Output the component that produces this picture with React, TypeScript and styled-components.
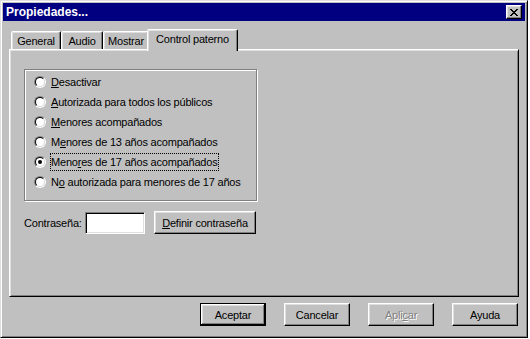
import styled, { createGlobalStyle } from "styled-components";

const GlobalStyle = createGlobalStyle`
  html, body {
    margin: 0;
    padding: 0;
    background: #ffffff;
  }
  body {
    font-family: "Liberation Sans", Arial, sans-serif;
    font-size: 11px;
    letter-spacing: -0.2px;
    color: #000;
  }
`;

const Window = styled.div`
  width: 528px;
  height: 338px;
  box-sizing: border-box;
  display: flex;
  flex-direction: column;
  padding: 2px;
  background: #c0c0c0;
  border: 1px solid;
  border-color: #dfdfdf #000 #000 #dfdfdf;
  box-shadow: inset 1px 1px #fff, inset -1px -1px #808080;
`;

const TitleBar = styled.div`
  height: 18px;
  display: flex;
  align-items: center;
  padding: 0 3px 0 3px;
  background: #000080;
  color: #fff;
  font-weight: bold;
  font-size: 12px;
  letter-spacing: 0;
`;

const TitleText = styled.span`
  flex: 1;
`;

const CloseButton = styled.div`
  width: 16px;
  height: 14px;
  box-sizing: border-box;
  display: flex;
  align-items: center;
  justify-content: center;
  background: #c0c0c0;
  border: 1px solid;
  border-color: #fff #000 #000 #fff;
  box-shadow: inset -1px -1px #808080, inset 1px 1px #dfdfdf;
`;

const Body = styled.div`
  flex: 1;
  display: flex;
  flex-direction: column;
  padding: 0 6px;
`;

const TabStrip = styled.div`
  margin-top: 8px;
  height: 20px;
  display: flex;
  align-items: flex-end;
  padding-left: 2px;
`;

const Tab = styled.div<{ $w: number; $active?: boolean }>`
  position: relative;
  width: ${(p) => p.$w}px;
  height: ${(p) => (p.$active ? 22 : 18)}px;
  box-sizing: border-box;
  margin: ${(p) => (p.$active ? "0 -2px -2px -2px" : "0")};
  z-index: ${(p) => (p.$active ? 2 : 0)};
  display: flex;
  justify-content: center;
  padding-top: ${(p) => (p.$active ? 3 : 3)}px;
  background: #c0c0c0;
  border: 1px solid;
  border-bottom: none;
  border-color: #fff #000 transparent #fff;
  border-radius: 2px 2px 0 0;
  box-shadow: inset -1px 0 #808080, inset 1px 1px #dfdfdf;
`;

const Panel = styled.div`
  flex: 1;
  position: relative;
  z-index: 1;
  box-sizing: border-box;
  padding: 19px 14px 0;
  border: 1px solid;
  border-color: #fff #000 #000 #fff;
  box-shadow: inset 1px 1px #dfdfdf, inset -1px -1px #808080;
`;

const GroupBox = styled.div`
  width: 233px;
  height: 132px;
  box-sizing: border-box;
  padding: 2px 0 0 9px;
  border: 1px solid #808080;
  box-shadow: inset 1px 1px #fff, 1px 1px #fff;
`;

const RadioRow = styled.div`
  height: 20px;
  display: flex;
  align-items: center;
`;

const RadioOuter = styled.span`
  flex: none;
  width: 12px;
  height: 12px;
  box-sizing: border-box;
  display: flex;
  align-items: center;
  justify-content: center;
  border-radius: 50%;
  border: 1px solid;
  border-color: #808080 #fff #fff #808080;
`;

const RadioInner = styled.span<{ $checked: boolean }>`
  width: 10px;
  height: 10px;
  box-sizing: border-box;
  display: flex;
  align-items: center;
  justify-content: center;
  border-radius: 50%;
  border: 1px solid;
  border-color: #000 #dfdfdf #dfdfdf #000;
  background: #fff;
  &::after {
    content: "";
    width: 4px;
    height: 4px;
    border-radius: 50%;
    background: ${(p) => (p.$checked ? "#000" : "transparent")};
  }
`;

const RadioLabel = styled.span<{ $focused?: boolean }>`
  margin-left: 4px;
  line-height: 16px;
  padding: 0 1px 0 0;
  border: 1px ${(p) => (p.$focused ? "dotted #000" : "solid transparent")};
`;

const Key = styled.span`
  text-decoration: underline;
  text-underline-offset: 1px;
`;

const PasswordRow = styled.div`
  margin-top: 10px;
  height: 23px;
  display: flex;
  align-items: center;
`;

const FieldLabel = styled.span`
  width: 61px;
`;

const TextField = styled.div`
  width: 60px;
  height: 22px;
  box-sizing: border-box;
  background: #fff;
  border: 1px solid;
  border-color: #808080 #fff #fff #808080;
  box-shadow: inset 1px 1px #000, inset -1px -1px #dfdfdf;
`;

const Button = styled.button<{ $w?: number; $default?: boolean }>`
  width: ${(p) => p.$w ?? 66}px;
  height: 23px;
  box-sizing: border-box;
  padding: 0;
  font: inherit;
  letter-spacing: inherit;
  color: ${(p) => (p.disabled ? "#808080" : "#000")};
  text-shadow: ${(p) => (p.disabled ? "1px 1px #fff" : "none")};
  background: #c0c0c0;
  border: 1px solid;
  border-color: ${(p) => (p.$default ? "#000" : "#fff #000 #000 #fff")};
  box-shadow: ${(p) =>
    p.$default
      ? "inset -1px -1px #000, inset 1px 1px #fff, inset -2px -2px #808080, inset 2px 2px #dfdfdf"
      : "inset -1px -1px #808080, inset 1px 1px #dfdfdf"};
`;

const DefineButton = styled(Button)`
  margin-left: 9px;
`;

const ButtonRow = styled.div`
  display: flex;
  justify-content: flex-end;
  gap: 18px;
  margin: 6px 1px 9px 0;
`;

const CloseGlyph = () => (
  <svg width="8" height="7" viewBox="0 0 8 7" shapeRendering="crispEdges">
    <path
      fill="#000"
      d="M0 0h2v1H0z M6 0h2v1H6z M1 1h2v1H1z M5 1h2v1H5z M2 2h4v1H2z M3 3h2v1H3z M2 4h4v1H2z M1 5h2v1H1z M5 5h2v1H5z M0 6h2v1H0z M6 6h2v1H6z"
    />
  </svg>
);

type Option = { pre: string; key: string; post: string };

const options: Option[] = [
  { pre: "", key: "D", post: "esactivar" },
  { pre: "", key: "A", post: "utorizada para todos los públicos" },
  { pre: "", key: "M", post: "enores acompañados" },
  { pre: "M", key: "e", post: "nores de 13 años acompañados" },
  { pre: "Meno", key: "r", post: "es de 17 años acompañados" },
  { pre: "N", key: "o", post: " autorizada para menores de 17 años" },
];

const selected = 4;

export default function App() {
  return (
    <>
      <GlobalStyle />
      <Window>
        <TitleBar>
          <TitleText>Propiedades...</TitleText>
          <CloseButton>
            <CloseGlyph />
          </CloseButton>
        </TitleBar>
        <Body>
          <TabStrip>
            <Tab $w={50}>General</Tab>
            <Tab $w={42}>Audio</Tab>
            <Tab $w={46}>Mostrar</Tab>
            <Tab $w={91} $active>
              Control paterno
            </Tab>
          </TabStrip>
          <Panel>
            <GroupBox>
              {options.map((o, i) => (
                <RadioRow key={i}>
                  <RadioOuter>
                    <RadioInner $checked={i === selected} />
                  </RadioOuter>
                  <RadioLabel $focused={i === selected}>
                    {o.pre}
                    <Key>{o.key}</Key>
                    {o.post}
                  </RadioLabel>
                </RadioRow>
              ))}
            </GroupBox>
            <PasswordRow>
              <FieldLabel>Contraseña:</FieldLabel>
              <TextField />
              <DefineButton $w={102}>
                <Key>D</Key>efinir contraseña
              </DefineButton>
            </PasswordRow>
          </Panel>
          <ButtonRow>
            <Button $default>Aceptar</Button>
            <Button>Cancelar</Button>
            <Button disabled>
              Apli<Key>c</Key>ar
            </Button>
            <Button>Ayuda</Button>
          </ButtonRow>
        </Body>
      </Window>
    </>
  );
}
